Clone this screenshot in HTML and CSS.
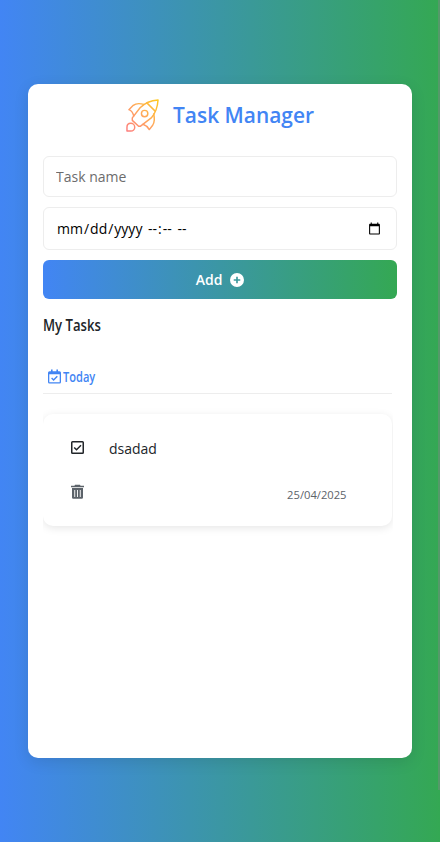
FILE: index.html
```html
<!DOCTYPE html>
<html lang="en-US">
<head>
<meta charset="utf-8">
<title>Task Manager</title>
<link rel="stylesheet" href="styles.css">
</head>
<body>
<main class="panel">
  <header class="brand">
    <svg class="rocket" viewBox="0 0 34 34" fill="none" stroke="url(#flame)" stroke-width="1.500" stroke-linejoin="round" stroke-linecap="round">
      <defs><linearGradient id="flame" gradientUnits="userSpaceOnUse" x1="1" y1="33" x2="33" y2="1"><stop offset="0" stop-color="#fd7d7d"/><stop offset=".5" stop-color="#ffa65c"/><stop offset="1" stop-color="#ffc91f"/></linearGradient></defs>
      <path d="M33 1C25.500 1.500 19.500 4 14.500 9L6.500 19.500V22L13 28H15L26 19.500C30 15 32.500 9 33 1Z"/>
      <path d="M21.500 4L30 12.500"/>
      <circle cx="19.200" cy="15" r="3.300"/>
      <path d="M18.500 5.500C14.500 4.500 10 4.500 7.500 6.500L3 11C5.500 12 7 13.500 8 17.500"/>
      <path d="M28.500 15.500C29.500 19.500 29.500 24 27.500 27L24 31.500C22.500 29 20.500 27 17.500 26"/>
      <path d="M1 33V29C1 26.300 2.800 25 5 25A4 4 0 0 1 5 33Z"/>
    </svg>
    <h1>Task Manager</h1>
  </header>
  <form class="form">
    <input class="field name" type="text" placeholder="Task name">
    <div class="field date" tabindex="0">
      <div class="parts"><span>mm</span>/<span>dd</span>/<span>yyyy</span> <span>--</span>:<span>--</span> <span>--</span></div>
      <svg viewBox="0 0 24 24" width="13" height="13"><path d="M20 3h-1V1h-2v2H7V1H5v2H4c-1.100 0-2 .9-2 2v16c0 1.100.9 2 2 2h16c1.100 0 2-.9 2-2V5c0-1.100-.9-2-2-2zm0 18H4V8h16v13z"/></svg>
    </div>
    <button class="add" type="button">Add
      <svg viewBox="0 0 512 512" width="14" height="14"><path fill="#fff" d="M256 0a256 256 0 1 0 0 512 256 256 0 1 0 0-512zM226 376v-90h-90v-60h90v-90h60v90h90v60h-90v90z"/></svg>
    </button>
  </form>
  <h2><span>My Tasks</span></h2>
  <section class="list">
    <h3>
      <svg viewBox="0 0 13 15" width="13" height="15"><path fill="#4285f4" d="M3 0.500h1.600V2.300h3.800V0.500H10V2.300h1.500A1.500 1.500 0 0 1 13 3.800v9.200a1.500 1.500 0 0 1-1.500 1.500h-10A1.500 1.500 0 0 1 0 13V3.800a1.500 1.500 0 0 1 1.500-1.500H3zM1.300 5.300v7.900h10.400V5.300z"/><path d="M3.600 9l2 2 3.700-3.800" fill="none" stroke="#4285f4" stroke-width="1.400"/></svg>
      <span>Today</span>
    </h3>
    <article class="task">
      <svg class="check" viewBox="0 0 13 13" width="13" height="13" fill="none" stroke="#212529" stroke-width="1.500"><rect x=".75" y=".75" width="11.500" height="11.500" rx=".8"/><path d="M3.200 6.500l2.300 2.300 4.500-4.500"/></svg>
      <p>dsadad</p>
      <svg class="trash" viewBox="0 0 13 15" width="13" height="15"><path fill="#5c636a" fill-rule="evenodd" d="M4 .8h5l.5 1H13v1.400H0V1.800h3.500zM1 4h11v9.500a1.300 1.300 0 0 1-1.300 1.300H2.300A1.300 1.300 0 0 1 1 13.500zM3.300 6v7h.9V6zM6.050 6v7h.9V6zM8.800 6v7h.9V6z"/></svg>
      <time>25/04/2025</time>
    </article>
  </section>
</main>
<div class="scrollbar"></div>
</body>
</html>
```
FILE: styles.css
```css
* { box-sizing: border-box; }
html, body { height: 100%; }
body {
  margin: 0;
  padding: 84px 28px;
  overflow: hidden;
  font-family: "Open Sans", sans-serif;
  color: #212529;
  background: linear-gradient(90deg, #4285f4, #34a853);
}
h1, h2, h3, p { margin: 0; }
svg { display: block; flex: none; }
.panel {
  height: 674px;
  padding: 14px 15px;
  border-radius: 10px;
  background: #fff;
  box-shadow: 0 4px 15px rgba(0, 0, 0, .1);
}
.brand { display: flex; justify-content: center; gap: 14px; height: 58px; }
.rocket { width: 33px; height: 33px; margin-top: 1px; }
.brand h1 { font-size: 20.900px; line-height: 34px; font-weight: 600; color: #4285f4; }
.form { display: flex; flex-direction: column; }
.field {
  width: 100%;
  margin: 0 0 10px;
  padding: 0 12px;
  border: 1px solid #ededed;
  border-radius: 6px;
  background: #fff;
  font: 14px "Open Sans", sans-serif;
  color: #000;
}
.name { height: 41px; }
.name::placeholder { color: #6c6c6c; opacity: 1; }
.date {
  display: flex;
  align-items: center;
  justify-content: space-between;
  height: 43px;
  padding-right: 15px;
}
.parts span { padding: 0 1px; }
.add {
  display: flex;
  justify-content: center;
  align-items: center;
  gap: 8px;
  height: 39px;
  padding: 0;
  border: 0;
  border-radius: 6px;
  background: linear-gradient(90deg, #4285f4, #34a853);
  color: #fff;
  font: 600 14px "Open Sans", sans-serif;
}
h2, h3 { font-weight: 600; }
h2 { margin-top: 14px; font-size: 16px; line-height: 24px; }
h2 span, h3 span { display: inline-block; transform: scaleX(.82); transform-origin: left; }
.list { width: 350px; margin-top: 24px; overflow: hidden; padding: 0 1px 10px 0; }
h3 {
  display: flex;
  align-items: center;
  gap: 2px;
  height: 33px;
  padding: 0 0 1px 5px;
  border-bottom: 1px solid #ededed;
  color: #4285f4;
  font-size: 13.500px;
}
.task {
  display: grid;
  grid-template-columns: 38px 1fr;
  grid-template-rows: 44px 44px;
  align-content: start;
  height: 112px;
  margin-top: 20px;
  padding: 13px 45.500px 0 28px;
  border-radius: 10px;
  background: #fff;
  box-shadow: 0 2px 8px rgba(0, 0, 0, .1);
}
.check { margin-top: 14px; }
.task p { font-size: 14px; line-height: 20px; margin-top: 12px; }
.trash { margin-top: 13px; }
time { justify-self: end; margin-top: 16px; font-size: 11.200px; line-height: 16px; color: #5c636a; }
.scrollbar { position: fixed; top: 0; right: 0; width: 2px; height: 790px; background: #55996a; }
```
